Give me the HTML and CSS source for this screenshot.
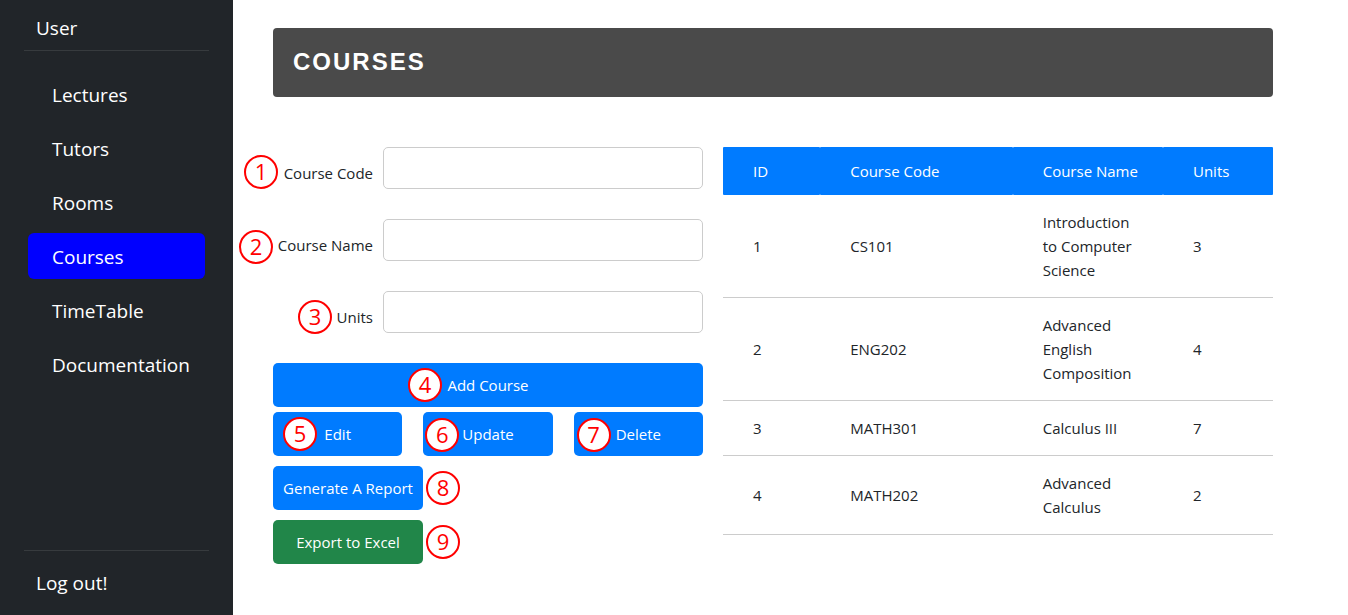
FILE: index.html
```html
<!DOCTYPE html>
<html lang="en">
<head>
<meta charset="utf-8">
<meta name="viewport" content="width=device-width, initial-scale=1">
<title>Courses</title>
<link rel="stylesheet" href="styles.css">
</head>
<body>
<div class="layout">
  <aside class="sidebar">
    <div class="sidebar-user">User</div>
    <hr class="divider">
    <nav class="menu">
      <a class="menu-link" href="#lectures">Lectures</a>
      <a class="menu-link" href="#tutors">Tutors</a>
      <a class="menu-link" href="#rooms">Rooms</a>
      <a class="menu-link active" href="#courses" aria-current="page">Courses</a>
      <a class="menu-link" href="#timetable">TimeTable</a>
      <a class="menu-link" href="#documentation">Documentation</a>
    </nav>
    <hr class="divider">
    <a class="logout" href="#logout">Log out!</a>
  </aside>

  <main class="main">
    <h1 class="title">Courses</h1>
    <div class="content">
      <form class="form">
        <div class="field">
          <label for="code">Course Code</label>
          <input id="code" type="text">
          <span class="badge badge-1">1</span>
        </div>
        <div class="field">
          <label for="name">Course Name</label>
          <input id="name" type="text">
          <span class="badge badge-2">2</span>
        </div>
        <div class="field">
          <label for="units">Units</label>
          <input id="units" type="text">
          <span class="badge badge-3">3</span>
        </div>
        <div class="actions">
          <div class="action"><button class="btn" type="button">Add Course</button><span class="badge badge-4">4</span></div>
          <div class="action-row">
            <div class="action"><button class="btn" type="button">Edit</button><span class="badge badge-5">5</span></div>
            <div class="action"><button class="btn" type="button">Update</button><span class="badge badge-6">6</span></div>
            <div class="action"><button class="btn" type="button">Delete</button><span class="badge badge-7">7</span></div>
          </div>
        </div>
        <div class="export">
          <div class="action"><button class="btn" type="button">Generate A Report</button><span class="badge badge-side">8</span></div>
          <div class="action"><button class="btn btn-excel" type="button">Export to Excel</button><span class="badge badge-side">9</span></div>
        </div>
      </form>

      <table class="courses">
        <colgroup><col class="col-id"><col class="col-code"><col class="col-name"><col class="col-units"></colgroup>
        <thead>
          <tr><th scope="col">ID</th><th scope="col">Course Code</th><th scope="col">Course Name</th><th scope="col">Units</th></tr>
        </thead>
        <tbody>
          <tr><td>1</td><td>CS101</td><td>Introduction to Computer Science</td><td>3</td></tr>
          <tr><td>2</td><td>ENG202</td><td>Advanced English Composition</td><td>4</td></tr>
          <tr><td>3</td><td>MATH301</td><td>Calculus III</td><td>7</td></tr>
          <tr><td>4</td><td>MATH202</td><td>Advanced Calculus</td><td>2</td></tr>
        </tbody>
      </table>
    </div>
  </main>
</div>
</body>
</html>
```

FILE: styles.css
```css
* { box-sizing: border-box; }

body {
  margin: 0;
  background: #fff;
  color: #212529;
  font-family: "Segoe UI", "Open Sans", "Noto Sans", sans-serif;
  font-size: 15px;
  line-height: 24px;
}

.layout {
  display: flex;
  min-height: 100vh;
}

/* Sidebar */
.sidebar {
  display: flex;
  flex-direction: column;
  flex: 0 0 233px;
  min-width: 0;
  padding: 13px 24px 17px;
  background: #212529;
  color: #fff;
  font-size: 19px;
  line-height: 30px;
}

.sidebar-user { padding: 0 12px 7px; }

.divider {
  width: 100%;
  margin: 0;
  border: 0;
  border-top: 1px solid #373b3e;
}

.menu {
  display: flex;
  flex: 1;
  flex-direction: column;
  gap: 8px;
  padding: 20px 4px;
}

.menu-link {
  padding: 9px 12px 7px 24px;
  border-radius: 6px;
  color: #fff;
  text-decoration: none;
}

.menu-link.active { background: #00f; }

.logout {
  padding: 17px 12px 0;
  color: #fff;
  text-decoration: none;
}

/* Main area */
.main {
  flex: 1;
  min-width: 0;
  padding: 28px 75px 28px 40px;
}

.title {
  margin: 0 0 50px;
  padding: 19px 20px 21px;
  border-radius: 4px;
  background: #4a4a4a;
  color: #fff;
  font: bold 24px/29px Arial, "Liberation Sans", sans-serif;
  letter-spacing: 2px;
  text-transform: uppercase;
}

.content {
  display: grid;
  grid-template-columns: 43fr 55fr;
  align-items: start;
  gap: 20px;
}

/* Form */
.form {
  display: flex;
  flex-direction: column;
  gap: 30px;
}

.field {
  position: relative;
  display: grid;
  grid-template-columns: 100px 1fr;
  align-items: center;
  gap: 10px;
}

.field label {
  padding-top: 10px;
  text-align: right;
  white-space: nowrap;
}

.field input {
  width: 100%;
  height: 42px;
  padding: 8px 10px;
  border: 1px solid #ccc;
  border-radius: 5px;
  font: inherit;
}

.actions {
  display: grid;
  gap: 5px;
}

.action-row {
  display: grid;
  grid-template-columns: repeat(3, 1fr);
  gap: 21px;
}

.export {
  display: grid;
  justify-items: start;
  gap: 10px;
  margin-top: -20px;
}

.action { position: relative; }

.btn {
  display: block;
  width: 100%;
  min-width: 150px;
  padding: 10px;
  border: 0;
  border-radius: 5px;
  background: #007bff;
  color: #fff;
  font: inherit;
  white-space: nowrap;
}

.action-row .btn { min-width: 0; }

.btn-excel { background: #218649; }

/* Numbered callouts over the controls */
.badge {
  position: absolute;
  width: 34px;
  height: 34px;
  border: 2px solid #f00;
  border-radius: 50%;
  background: #fff;
  color: #f00;
  font-size: 22px;
  line-height: 29px;
  text-align: center;
}

.badge-1 { top: 8px; left: -29px; }
.badge-2 { top: 11px; left: -34px; }
.badge-3 { top: 9px; left: 25px; }
.badge-4 { top: 5px; left: 135px; }
.badge-5 { top: 5px; left: 10px; }
.badge-6 { top: 6px; left: 2px; }
.badge-7 { top: 6px; left: 3px; }
.badge-side { top: 5px; left: 153px; }

/* Course table */
.courses {
  width: 100%;
  border-collapse: separate;
  border-spacing: 0;
  table-layout: fixed;
}

.col-id { width: 97px; }
.col-code { width: 35%; }
.col-name { width: 150px; }
.col-units { width: 20%; }

.courses th,
.courses td {
  padding: 15px 20px 15px 30px;
  text-align: left;
  vertical-align: middle;
}

.courses th {
  padding: 12px 20px 12px 30px;
  border-radius: 1px;
  background: #007bff;
  color: #fff;
  font-weight: 400;
  white-space: nowrap;
}

.courses td { border-bottom: 1px solid #ccc; }
```
